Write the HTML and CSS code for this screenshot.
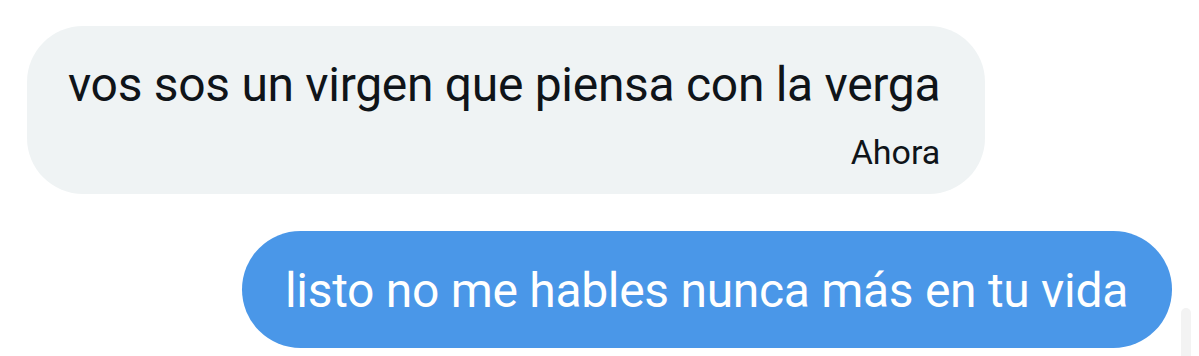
FILE: index.html
```html
<!DOCTYPE html>
<html lang="es">
<head>
    <meta charset="UTF-8">
    <meta name="viewport" content="width=device-width, initial-scale=1.0">
    <title>Mensajes</title>
    <link rel="stylesheet" href="styles.css">
</head>
<body>
    <div class="chat">
        <div class="msg rec">
            <div class="txt">vos sos un virgen que piensa con la verga</div>
            <div class="hora">Ahora</div>
        </div>

        <div class="msg env">
            <div class="txt">listo no me hables nunca más en tu vida</div>
        </div>
    </div>
    <div class="barra"></div>
</body>
</html>
```

FILE: styles.css
```css
body {
    margin: 0;
    background: #fff;
    font-family: Roboto, "Noto Sans", sans-serif;
    color: #0f1419;
    overflow: hidden;
}

.chat {
    display: flex;
    flex-direction: column;
    padding: 26px 27px 0 27px;
    gap: 37px;
}

.msg {
    border-radius: 56px;
}

.txt {
    font-size: 48px;
    line-height: 56px;
    letter-spacing: -0.3px;
    white-space: nowrap;
}

.rec {
    align-self: flex-start;
    background: #eff3f4;
    padding: 31px 45px 24px 41px;
}

.hora {
    text-align: right;
    font-size: 34px;
    line-height: 36px;
    margin-top: 21px;
}

.env {
    align-self: flex-end;
    background: #4a97e8;
    color: #fff;
    padding: 32px 44px 29px 43px;
    border-radius: 59px;
}

.barra {
    position: absolute;
    left: 1181px;
    top: 308px;
    width: 10px;
    height: 48px;
    background: #f3f3f3;
    border-radius: 5px 5px 0 0;
}
```
